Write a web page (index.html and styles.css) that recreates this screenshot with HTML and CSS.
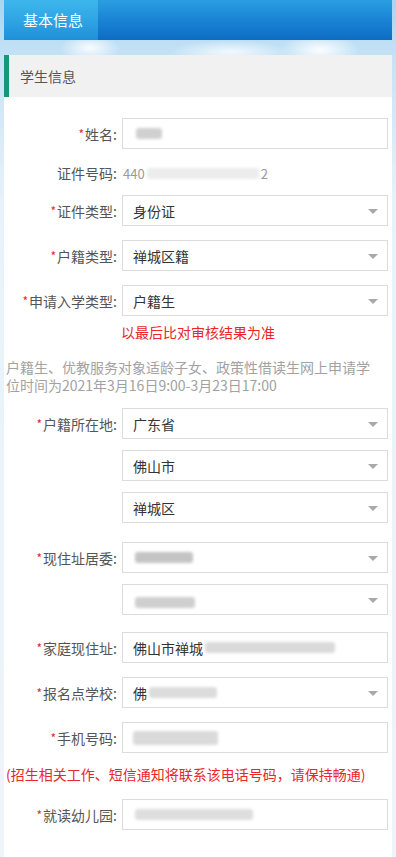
FILE: index.html
```html
<!DOCTYPE html>
<html lang="zh">
<head>
<meta charset="utf-8">
<title>基本信息</title>
<link rel="stylesheet" href="styles.css">
</head>
<body>
<div class="topbar">
  <div class="tab">基本信息</div>
</div>
<div class="panel">
  <div class="sec-head">学生信息</div>
  <div class="form">
    <div class="row r-first">
      <label class="lbl"><span class="req">*</span>姓名:</label>
      <div class="field"><span class="blob b-name"></span></div>
    </div>
    <div class="row r-text">
      <label class="lbl">证件号码:</label>
      <div class="plain">440<span class="blob b-id"></span>2</div>
    </div>
    <div class="row">
      <label class="lbl"><span class="req">*</span>证件类型:</label>
      <div class="field sel">身份证</div>
    </div>
    <div class="row">
      <label class="lbl"><span class="req">*</span>户籍类型:</label>
      <div class="field sel">禅城区籍</div>
    </div>
    <div class="row r-tight">
      <label class="lbl"><span class="req">*</span>申请入学类型:</label>
      <div class="field sel">户籍生</div>
    </div>
    <p class="warn">以最后比对审核结果为准</p>
    <p class="note">户籍生、优教服务对象适龄子女、政策性借读生网上申请学位时间为2021年3月16日9:00-3月23日17:00</p>
    <div class="row r-casc">
      <label class="lbl"><span class="req">*</span>户籍所在地:</label>
      <div class="field sel">广东省</div>
    </div>
    <div class="row r-casc">
      <label class="lbl"></label>
      <div class="field sel">佛山市</div>
    </div>
    <div class="row r-group">
      <label class="lbl"></label>
      <div class="field sel">禅城区</div>
    </div>
    <div class="row r-casc">
      <label class="lbl"><span class="req">*</span>现住址居委:</label>
      <div class="field sel"><span class="blob b-jw1"></span></div>
    </div>
    <div class="row r-group2">
      <label class="lbl"></label>
      <div class="field sel"><span class="blob b-jw2"></span></div>
    </div>
    <div class="row">
      <label class="lbl"><span class="req">*</span>家庭现住址:</label>
      <div class="field">佛山市禅城<span class="blob b-addr"></span></div>
    </div>
    <div class="row">
      <label class="lbl"><span class="req">*</span>报名点学校:</label>
      <div class="field sel">佛<span class="blob b-school"></span></div>
    </div>
    <div class="row r-tight">
      <label class="lbl"><span class="req">*</span>手机号码:</label>
      <div class="field"><span class="blob b-phone"></span></div>
    </div>
    <p class="warn2">(招生相关工作、短信通知将联系该电话号码，请保持畅通)</p>
    <div class="row">
      <label class="lbl"><span class="req">*</span>就读幼儿园:</label>
      <div class="field"><span class="blob b-kg"></span></div>
    </div>
  </div>
</div>
</body>
</html>
```

FILE: styles.css
```css
* { box-sizing: border-box; }
html, body { margin: 0; padding: 0; }
body {
  font-family: "Noto Sans CJK SC", "Noto Sans", sans-serif;
  font-size: 14px;
  color: #333;
  min-height: 857px;
  background:
    radial-gradient(ellipse 30px 14px at 90px 48px, rgba(255,255,255,0.9), rgba(255,255,255,0) 100%),
    radial-gradient(ellipse 40px 16px at 320px 50px, rgba(255,255,255,0.95), rgba(255,255,255,0) 100%),
    radial-gradient(ellipse 60px 12px at 230px 52px, rgba(255,255,255,0.8), rgba(255,255,255,0) 100%),
    linear-gradient(180deg, #a9d4f0 0px, #c6e3f6 60px, #e7f2fa 200px, #eef5fa 857px);
}
.topbar {
  margin: 0 4px;
  height: 40px;
  background: linear-gradient(180deg, #2b9ee2 0%, #1a84d4 50%, #0d6cc4 100%);
  display: flex;
}
.tab {
  width: 94px;
  height: 40px;
  line-height: 40px;
  padding-left: 19px;
  color: #fff;
  font-size: 15px;
  background: linear-gradient(180deg, #3db6ec 0%, #2ea3e3 55%, #1e90d8 100%);
}
.panel {
  margin: 15px 4px 0;
  background: #fff;
  min-height: 802px;
}
.sec-head {
  height: 42px;
  line-height: 42px;
  background: #f1f1f1;
  border-left: 5px solid #17977a;
  padding-left: 11px;
  color: #555;
  font-size: 14px;
}
.form { padding: 21px 4px 20px 0; }
.row {
  display: flex;
  align-items: center;
  margin-bottom: 14px;
}
.row.r-tight { margin-bottom: 6px; }
.row.r-casc { margin-bottom: 11px; }
.row.r-group { margin-bottom: 19px; }
.row.r-group2 { margin-bottom: 17px; }
.row.r-text { margin: 12px 0 12px; height: 20px; }
.lbl {
  width: 114px;
  flex: none;
  text-align: right;
  color: #555;
  font-size: 14px;
  padding-right: 1px;
}
.req { color: #e8262b; font-size: 12px; margin-right: 1px; position: relative; top: -1px; }
.field {
  flex: 1;
  margin-left: 4px;
  height: 31px;
  border: 1px solid #dcdcdc;
  background: #fff;
  display: flex;
  align-items: center;
  padding-left: 10px;
  color: #333;
  font-size: 14px;
  position: relative;
}
.field.sel::after {
  content: "";
  position: absolute;
  right: 9px;
  top: 13px;
  border-left: 5px solid transparent;
  border-right: 5px solid transparent;
  border-top: 5px solid #a9a9a9;
}
.plain {
  margin-left: 5px;
  color: #999;
  font-size: 13px;
  display: flex;
  align-items: center;
}
.blob {
  display: inline-block;
  height: 11px;
  border-radius: 3px;
  background: #d2d2d2;
  filter: blur(1.5px);
}
.b-name { width: 26px; margin-left: 3px; background: #d0d0d0; }
.b-id { width: 112px; margin: 0 2px; background: #ececec; }
.b-jw1 { width: 58px; background: #c4c4c4; margin-left: 2px; }
.b-jw2 { width: 60px; background: #cfcfcf; margin-left: 2px; margin-top: 6px; }
.b-addr { width: 130px; background: #dadada; margin-left: 2px; }
.b-school { width: 68px; background: #dcdcdc; margin-left: 2px; }
.b-phone { width: 85px; height: 14px; background: #dadada; margin-left: 0; }
.b-kg { width: 118px; background: #dedede; margin-left: 2px; }
.warn {
  margin: 0 0 0 117px;
  color: #e8262b;
  font-size: 14px;
  line-height: 20px;
}
.note {
  margin: 16px 0 14px 2px;
  max-width: 368px;
  color: #a2a2a2;
  font-size: 14px;
  line-height: 18px;
}
.warn2 {
  margin: 11px 0 15px 2px;
  color: #e8262b;
  font-size: 14px;
  line-height: 20px;
  white-space: nowrap;
}
```
